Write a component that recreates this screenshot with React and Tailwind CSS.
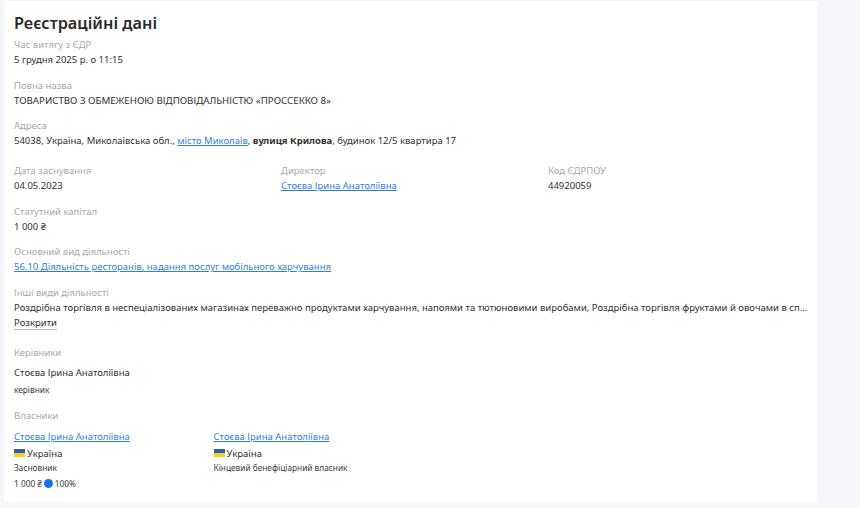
const font = "font-['Noto_Sans',sans-serif]";

function Field({ label, children, className = 'mb-[10.5px]' }) {
  return (
    <div className={className}>
      <div className="text-[9.5px] leading-[15px] text-[#a8a8a8]">{label}</div>
      <div className="text-[9.5px] leading-[15px] text-[#303030] whitespace-nowrap">{children}</div>
    </div>
  );
}

function Lnk({ children }) {
  return <a href="#" className="text-[#2f7fe0] underline">{children}</a>;
}

function Flag() {
  return (
    <span className="flex flex-col w-[11px] h-[8px] mr-[2px]">
      <span className="h-1/2 bg-[#2a5bb0]" />
      <span className="h-1/2 bg-[#f5d020]" />
    </span>
  );
}

function Owner({ role, share, className = '' }) {
  return (
    <div className={className}>
      <div className="text-[9.5px] leading-[15px] whitespace-nowrap"><Lnk>Стоєва Ірина Анатоліївна</Lnk></div>
      <div className="mt-[2px] flex items-center text-[9.5px] leading-[15px] text-[#303030]"><Flag />Україна</div>
      <div className="text-[8.3px] leading-[14px] text-[#3a3a3a]">{role}</div>
      {share && (
        <div className="mt-[1px] flex items-center text-[8.3px] leading-[15px] text-[#3a3a3a] h-[16px]">
          1 000 ₴
          <span className="mx-[2px] w-[9px] h-[9px] rounded-full bg-[#1a73e8]" />
          100%
        </div>
      )}
    </div>
  );
}

export default function App() {
  return (
    <div className={`${font} w-[860px] h-[508px] overflow-hidden bg-[#f6f7fa] pt-px pl-1`}>
      <div className="w-[814px] h-[501px] bg-white rounded-[4px] pl-[10px] pr-[10px] pt-[10px]">
        <h1 className="text-[16.3px] leading-[24px] font-semibold text-[#2a2a2a] mb-[2.4px]">Реєстраційні дані</h1>
        <Field label="Час витягу з ЄДР">5 грудня 2025 р. о 11:15</Field>
        <Field label="Повна назва"><span className="text-[9.7px]">ТОВАРИСТВО З ОБМЕЖЕНОЮ ВІДПОВІДАЛЬНІСТЮ «ПРОССЕККО 8»</span></Field>
        <Field label="Адреса" className="mb-[15px]">
          54038, Україна, Миколаївська обл., <Lnk>місто Миколаїв</Lnk>, <b className="font-bold">вулиця Крилова</b>, будинок 12/5 квартира 17
        </Field>
        <div className="flex">
          <Field label="Дата заснування" className="w-[267px] mb-[10.5px]">04.05.2023</Field>
          <Field label="Директор" className="w-[267px] mb-[10.5px]"><Lnk>Стоєва Ірина Анатоліївна</Lnk></Field>
          <Field label="Код ЄДРПОУ">44920059</Field>
        </div>
        <Field label="Статутний капітал">1 000 ₴</Field>
        <Field label="Основний вид діяльності"><Lnk>56.10 Діяльність ресторанів, надання послуг мобільного харчування</Lnk></Field>
        <div className="mb-[15px]">
          <div className="text-[9.5px] leading-[15px] text-[#a8a8a8]">Інші види діяльності</div>
          <div className="text-[9.5px] leading-[15px] text-[#303030] whitespace-nowrap">
            Роздрібна торгівля в неспеціалізованих магазинах переважно продуктами харчування, напоями та тютюновими виробами, Роздрібна торгівля фруктами й овочами в сп...
          </div>
          <div className="text-[9.5px] leading-[15px] text-[#303030]"><span className="border-b border-[#bbb]">Розкрити</span></div>
        </div>
        <div className="text-[9.5px] leading-[15px] text-[#a8a8a8] mb-[5px]">Керівники</div>
        <div className="text-[9.5px] leading-[15px] text-[#303030] mb-[2px]">Стоєва Ірина Анатоліївна</div>
        <div className="text-[8.3px] leading-[15px] text-[#3a3a3a] mb-[11px]">керівник</div>
        <div className="text-[9.5px] leading-[15px] text-[#a8a8a8] mb-[6px]">Власники</div>
        <div className="flex">
          <Owner className="w-[199.5px]" role="Засновник" share />
          <Owner role="Кінцевий бенефіціарний власник" />
        </div>
      </div>
    </div>
  );
}
